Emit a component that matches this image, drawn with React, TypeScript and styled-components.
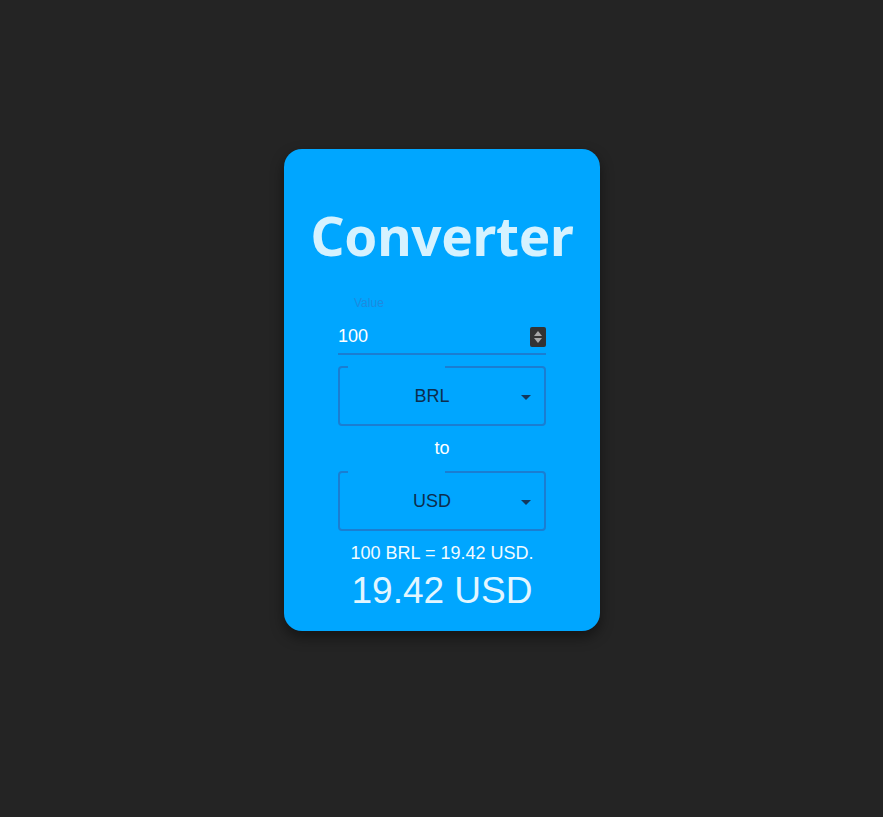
import React, { useState } from "react";
import styled, { createGlobalStyle } from "styled-components";

const GlobalStyle = createGlobalStyle`
  html, body {
    margin: 0;
    padding: 0;
    background: #242424;
  }
  body {
    font-family: "Liberation Sans", Arial, sans-serif;
  }
`;

const Page = styled.div`
  min-height: 817px;
  display: flex;
  align-items: flex-start;
  justify-content: center;
  padding-top: 149px;
  padding-left: 1px;
  box-sizing: border-box;
`;

const Card = styled.div`
  width: 316px;
  height: 482px;
  box-sizing: border-box;
  background: #00a6ff;
  border-radius: 18px;
  box-shadow: 0 6px 14px rgba(0, 0, 0, 0.45);
  display: flex;
  flex-direction: column;
  align-items: center;
  padding: 52px 54px 0;
`;

const Title = styled.h1`
  margin: 0;
  font-family: "Noto Sans", "Open Sans", sans-serif;
  font-weight: 700;
  font-size: 53px;
  line-height: 70px;
  color: #d6f2ff;
  letter-spacing: -0.3px;
`;

const Field = styled.div`
  width: 100%;
  display: flex;
  flex-direction: column;
  margin-top: 25px;
`;

const Label = styled.label`
  font-size: 12px;
  color: #1d8ae0;
  padding-left: 16px;
  line-height: 14px;
`;

const InputRow = styled.div`
  display: flex;
  align-items: center;
  height: 36px;
  margin-top: 9px;
  border-bottom: 2px solid #1a7ed2;
  box-sizing: border-box;
`;

const NumberInput = styled.input`
  flex: 1;
  min-width: 0;
  width: 100%;
  border: none;
  background: transparent;
  outline: none;
  color: #ffffff;
  font-family: "Liberation Sans", Arial, sans-serif;
  font-size: 18px;
  padding: 0;
  &::-webkit-inner-spin-button,
  &::-webkit-outer-spin-button {
    -webkit-appearance: none;
    margin: 0;
  }
`;

const Spinner = styled.div`
  flex: none;
  width: 16px;
  height: 20px;
  background: #333333;
  border-radius: 2px;
  display: flex;
  flex-direction: column;
  align-items: center;
  justify-content: center;
  gap: 2px;
  margin-top: 2px;
`;

const SpinArrow = styled.span<{ $down?: boolean }>`
  width: 0;
  height: 0;
  border-left: 4px solid transparent;
  border-right: 4px solid transparent;
  ${({ $down }) =>
    $down ? "border-top: 5px solid #a8a8a8;" : "border-bottom: 5px solid #a8a8a8;"}
`;

const SelectBox = styled.div<{ $gap: number }>`
  position: relative;
  width: 100%;
  height: 60px;
  box-sizing: border-box;
  margin-top: ${({ $gap }) => $gap}px;
  border: 2px solid #1a7ed2;
  border-radius: 4px;
  display: flex;
  align-items: center;
  justify-content: center;
`;

const Notch = styled.span`
  position: absolute;
  top: -2px;
  left: 8px;
  width: 97px;
  height: 2px;
  background: #00a6ff;
`;

const SelectValue = styled.span`
  font-size: 18px;
  color: #0d2d4d;
  margin-right: 20px;
`;

const Caret = styled.span`
  position: absolute;
  right: 13px;
  top: 27px;
  width: 0;
  height: 0;
  border-left: 5px solid transparent;
  border-right: 5px solid transparent;
  border-top: 5px solid #13385c;
`;

const Connector = styled.div`
  font-size: 18px;
  color: #ffffff;
  line-height: 20px;
  margin: 12px 0 13px;
`;

const Summary = styled.div`
  font-size: 18px;
  color: #f2fbff;
  margin-top: 11px;
  line-height: 22px;
`;

const Result = styled.div`
  font-size: 37px;
  color: #e3f6ff;
  line-height: 44px;
  margin-top: 5px;
`;

function CurrencySelect({ value, gap }: { value: string; gap: number }) {
  return (
    <SelectBox $gap={gap}>
      <Notch />
      <SelectValue>{value}</SelectValue>
      <Caret />
    </SelectBox>
  );
}

export default function App() {
  const [amount, setAmount] = useState("100");
  return (
    <>
      <GlobalStyle />
      <Page>
        <Card>
          <Title>Converter</Title>
          <Field>
            <Label>Value</Label>
            <InputRow>
              <NumberInput
                type="number"
                value={amount}
                onChange={(e) => setAmount(e.target.value)}
              />
              <Spinner>
                <SpinArrow />
                <SpinArrow $down />
              </Spinner>
            </InputRow>
          </Field>
          <CurrencySelect value="BRL" gap={11} />
          <Connector>to</Connector>
          <CurrencySelect value="USD" gap={0} />
          <Summary>100 BRL = 19.42 USD.</Summary>
          <Result>19.42 USD</Result>
        </Card>
      </Page>
    </>
  );
}
